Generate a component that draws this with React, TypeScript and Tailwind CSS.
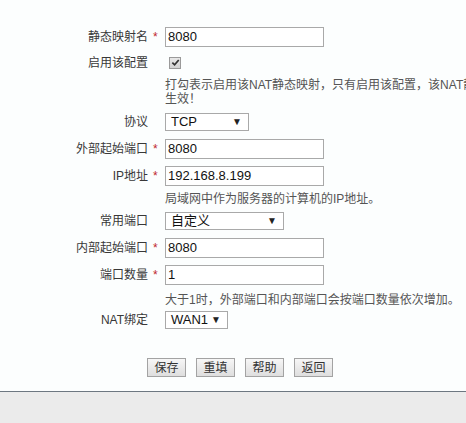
import React from "react";

const FONT = { fontFamily: '"Liberation Sans", Arial, "Noto Sans CJK SC", sans-serif' };

type RowProps = {
  label: string;
  required?: boolean;
  h: string;
  children: React.ReactNode;
};

function Row({ label, required, h, children }: RowProps) {
  return (
    <div className={`flex items-center ${h}`}>
      <div className="w-[148px] text-right text-[12px] text-[#383838] whitespace-nowrap">{label}</div>
      <div className="w-[17px] pl-[5px] text-[12px] text-[#c0272d] leading-none">{required ? "*" : ""}</div>
      <div className="flex items-center">{children}</div>
    </div>
  );
}

function TextBox({ value }: { value: string }) {
  return (
    <input
      type="text"
      defaultValue={value}
      className="w-[159px] h-[20px] border border-[#a9a9a9] bg-white px-[2px] text-[13px] text-[#111] outline-none"
      style={FONT}
    />
  );
}

function Pick({ value, w }: { value: string; w: string }) {
  return (
    <div className={`${w} h-[18px] border border-[#a9a9a9] bg-white flex items-center justify-between pl-[5px] pr-[6px] text-[13px] text-[#111]`}>
      <span>{value}</span>
      <span className="text-[10px] leading-none text-[#222]">▼</span>
    </div>
  );
}

function Hint({ children, pt, w }: { children: React.ReactNode; pt: string; w?: string }) {
  return (
    <div className={`${pt} pl-[165px]`}>
      <div className={`${w ?? "w-[300px]"} text-[12px] leading-[14px] text-[#555]`}>{children}</div>
    </div>
  );
}

export default function App() {
  const buttons = ["保存", "重填", "帮助", "返回"];
  return (
    <div className="w-[466px] h-[423px] overflow-hidden bg-white flex flex-col" style={FONT}>
      <div className="flex-1 bg-[#fcfefe] pt-[23px]">
        <Row label="静态映射名" required h="h-[27px]">
          <TextBox value="8080" />
        </Row>
        <Row label="启用该配置" h="h-[25px]">
          <span className="ml-[4px] w-[12px] h-[12px] border border-[#9a9a9a] bg-gradient-to-b from-[#e8e8e8] to-[#d2d2d2] flex items-center justify-center">
            <svg viewBox="0 0 10 10" width="9" height="9">
              <path d="M1.5 5.2 L4 7.6 L8.6 2.2" fill="none" stroke="#333" strokeWidth="1.9" />
            </svg>
          </span>
        </Row>
        <div className="pb-[3px]">
          <Hint pt="pt-[3px]" w="w-[380px]">
            打勾表示启用该NAT静态映射，只有启用该配置，该NAT静态映射才能生效！
          </Hint>
        </div>
        <Row label="协议" h="h-[26px]">
          <Pick value="TCP" w="w-[84px]" />
        </Row>
        <Row label="外部起始端口" required h="h-[27px]">
          <TextBox value="8080" />
        </Row>
        <Row label="IP地址" required h="h-[27px]">
          <TextBox value="192.168.8.199" />
        </Row>
        <div className="h-[19px]">
          <Hint pt="pt-[3px]">局域网中作为服务器的计算机的IP地址。</Hint>
        </div>
        <Row label="常用端口" h="h-[26px]">
          <Pick value="自定义" w="w-[119px]" />
        </Row>
        <Row label="内部起始端口" required h="h-[27px]">
          <TextBox value="8080" />
        </Row>
        <Row label="端口数量" required h="h-[27px]">
          <TextBox value="1" />
        </Row>
        <div className="h-[19px]">
          <Hint pt="pt-[5px]">大于1时，外部端口和内部端口会按端口数量依次增加。</Hint>
        </div>
        <Row label="NAT绑定" h="h-[26px]">
          <Pick value="WAN1" w="w-[63px]" />
        </Row>
        <div className="mt-[25px] pl-[147px] flex gap-[10px]">
          {buttons.map((b) => (
            <button
              key={b}
              type="button"
              className="w-[39px] h-[19px] border border-[#a3a3a3] bg-gradient-to-b from-[#f7f7f7] to-[#dedede] text-[12px] leading-none text-[#333] flex items-center justify-center"
            >
              {b}
            </button>
          ))}
        </div>
      </div>
      <div className="h-[32px] border-t border-[#6d7781] bg-[#ebebeb]" />
    </div>
  );
}
